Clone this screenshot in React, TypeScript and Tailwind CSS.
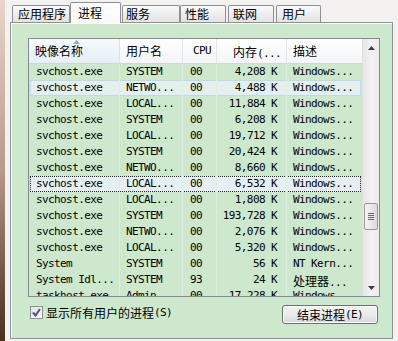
import React from "react";

const rows: string[][] = [
  ["svchost.exe", "SYSTEM", "00", "4,208 K", "Windows..."],
  ["svchost.exe", "NETWO...", "00", "4,488 K", "Windows..."],
  ["svchost.exe", "LOCAL...", "00", "11,884 K", "Windows..."],
  ["svchost.exe", "SYSTEM", "00", "6,208 K", "Windows..."],
  ["svchost.exe", "LOCAL...", "00", "19,712 K", "Windows..."],
  ["svchost.exe", "SYSTEM", "00", "20,424 K", "Windows..."],
  ["svchost.exe", "NETWO...", "00", "8,660 K", "Windows..."],
  ["svchost.exe", "LOCAL...", "00", "6,532 K", "Windows..."],
  ["svchost.exe", "LOCAL...", "00", "1,808 K", "Windows..."],
  ["svchost.exe", "SYSTEM", "00", "193,728 K", "Windows..."],
  ["svchost.exe", "NETWO...", "00", "2,076 K", "Windows..."],
  ["svchost.exe", "LOCAL...", "00", "5,320 K", "Windows..."],
  ["System", "SYSTEM", "00", "56 K", "NT Kern..."],
  ["System Idl...", "SYSTEM", "93", "24 K", "处理器..."],
  ["taskhost.exe", "Admin...", "00", "17,228 K", "Windows..."],
];

const MONO = "font-['DejaVu_Sans_Mono','Noto_Sans_CJK_SC',monospace] text-[11px] tracking-[-0.6px]";
const CJK = "font-['Noto_Sans_CJK_SC',sans-serif] text-[12px]";

function Tab({ children, cls, selected }: { children: React.ReactNode; cls: string; selected?: boolean }) {
  return (
    <div
      className={
        selected
          ? `h-[21px] -mb-px relative border border-b-0 border-[#8b8e94] rounded-t-[2px] bg-[#fcfcfc] ${CJK} leading-[18px] ${cls}`
          : `h-[17px] border border-b-0 border-[#8e9095] rounded-t-[2px] bg-gradient-to-b from-[#fbfbfb] to-[#e2e2e2] ${CJK} leading-[16px] ${cls}`
      }
    >
      {children}
    </div>
  );
}

function Row({ r, i }: { r: string[]; i: number }) {
  const hover = i === 1;
  const focus = i === 7;
  return (
    <div className="relative h-[16px] flex shrink-0">
      {hover && <div className="absolute left-[1px] right-[1px] top-0 bottom-0 bg-[#e3f0ee] border border-[#bfd9e8]" />}
      {focus && <div className="absolute left-[1px] right-[1px] top-0 bottom-0 bg-[#e6eff3] border border-dotted border-[#222]" />}
      <div className={`relative w-[91px] pl-[7px] leading-[16px] whitespace-nowrap border-r border-[#dcefdc] ${MONO}`}>{r[0]}</div>
      <div className={`relative w-[63px] pl-[6px] leading-[16px] whitespace-nowrap border-r border-[#dcefdc] ${MONO}`}>{r[1]}</div>
      <div className={`relative w-[34px] pl-[7px] leading-[16px] whitespace-nowrap border-r border-[#dcefdc] ${MONO}`}>{r[2]}</div>
      <div className={`relative w-[70px] pr-[9px] text-right leading-[16px] whitespace-nowrap border-r border-[#dcefdc] ${MONO}`}>{r[3]}</div>
      <div className={`relative w-[75px] pl-[6px] leading-[16px] whitespace-nowrap ${r[4] === "处理器..." ? "" : MONO}`}>
        {r[4] === "处理器..." ? (
          <>
            <span className={CJK}>处理器</span>
            <span className={MONO}>...</span>
          </>
        ) : (
          r[4]
        )}
      </div>
    </div>
  );
}

export default function App() {
  return (
    <div className="w-[398px] h-[341px] flex overflow-hidden bg-[#f3f2f0] text-black">
      <div className="w-[5px] h-full shrink-0 bg-gradient-to-b from-[#e8d5cc] via-[#b8998a] to-[#4a301e]" />
      <div className="flex-1 flex flex-col pl-[5px] pr-[5px]">
        <div className="h-[22px] flex items-end pl-[2px] relative z-10">
          <Tab cls="w-[58px] pl-[5px]">应用程序</Tab>
          <Tab cls="w-[51px] pl-[7px] pt-[1px]" selected>进程</Tab>
          <Tab cls="w-[58px] ml-[1px] pl-[3px]">服务</Tab>
          <Tab cls="w-[46px] pl-[4px]">性能</Tab>
          <Tab cls="w-[46px] ml-[2px] pl-[4px]">联网</Tab>
          <Tab cls="w-[45px] ml-[2px] pl-[5px]">用户</Tab>
        </div>
        <div className="h-[317px] border border-[#8d9097] bg-[#cde8cd] shadow-[inset_1px_1px_0_#ffffff] pt-[15px] pl-[17px] flex flex-col">
          <div className="w-[352px] h-[259px] border border-[#848a93] flex overflow-hidden bg-[#cde8cd]">
            <div className="w-[333px] flex flex-col overflow-hidden">
              <div className="h-[25px] shrink-0 flex border-b border-[#d5d5d5] bg-gradient-to-b from-[#ffffff] to-[#f4f5f7]">
                <div className={`relative w-[91px] pl-[6px] leading-[24px] border-r border-[#dde1e6] bg-gradient-to-b from-[#f6fafd] to-[#e4eff7] ${CJK}`}>
                  <svg className="absolute left-[44px] top-[1px]" width="7" height="4" viewBox="0 0 7 4">
                    <path d="M3.5 0 L7 4 L0 4 Z" fill="#97aac0" />
                  </svg>
                  映像名称
                </div>
                <div className={`w-[63px] pl-[6px] leading-[24px] border-r border-[#e3e5e8] ${CJK}`}>用户名</div>
                <div className={`w-[34px] pl-[10px] leading-[24px] border-r border-[#e3e5e8] ${MONO}`}>CPU</div>
                <div className="w-[70px] pl-[16px] leading-[24px] border-r border-[#e3e5e8] whitespace-nowrap">
                  <span className={CJK}>内存</span>
                  <span className={MONO}>(...</span>
                </div>
                <div className={`w-[75px] pl-[6px] leading-[24px] ${CJK}`}>描述</div>
              </div>
              {rows.map((r, i) => (
                <Row key={i} r={r} i={i} />
              ))}
            </div>
            <div className="w-[17px] flex flex-col bg-gradient-to-r from-[#e6e6e6] via-[#f2f2f2] to-[#ececec] border-l border-[#e0e0e0]">
              <div className="h-[17px] flex items-center justify-center shrink-0">
                <svg width="7" height="4" viewBox="0 0 7 4">
                  <path d="M3.5 0 L7 4 L0 4 Z" fill="#3c3c3c" />
                </svg>
              </div>
              <div className="mt-[147px] mx-[1px] h-[27px] rounded-[2px] border border-[#989898] bg-gradient-to-r from-[#f5f5f5] to-[#dadada] flex flex-col items-center justify-center gap-[1px] shrink-0">
                <div className="w-[6px] h-[1px] bg-[#6a6a6a]" />
                <div className="w-[6px] h-[1px] bg-[#6a6a6a]" />
                <div className="w-[6px] h-[1px] bg-[#6a6a6a]" />
                <div className="w-[6px] h-[1px] bg-[#6a6a6a]" />
              </div>
              <div className="flex-1" />
              <div className="h-[17px] flex items-center justify-center shrink-0">
                <svg width="7" height="4" viewBox="0 0 7 4">
                  <path d="M0 0 L7 0 L3.5 4 Z" fill="#3c3c3c" />
                </svg>
              </div>
            </div>
          </div>
          <div className="w-[352px] mt-[7px] flex justify-between px-[2px]">
            <div className="flex items-center h-[16px]">
              <div className="w-[13px] h-[13px] border border-[#8f8f8f] bg-gradient-to-br from-[#e4e4e4] to-[#fafafa] flex items-center justify-center">
                <svg width="9" height="9" viewBox="0 0 9 9">
                  <path d="M1 4.5 L3.5 7.5 L8 1" stroke="#4a4f9c" strokeWidth="2" fill="none" />
                </svg>
              </div>
              <span className={`ml-[3px] ${CJK} leading-[16px] pt-[2px]`}>显示所有用户的进程</span>
              <span className={`${MONO} leading-[16px] pt-[2px]`}>(S)</span>
            </div>
            <div className="mt-[1px] w-[96px] h-[19px] rounded-[3px] border border-[#707070] bg-gradient-to-b from-[#f3f3f3] via-[#ebebeb] to-[#d8d8d8] shadow-[inset_0_0_0_1px_#fbfbfb] flex items-center justify-center">
              <span className={`${CJK} leading-[16px]`}>结束进程</span>
              <span className={`${MONO} leading-[16px]`}>(E)</span>
            </div>
          </div>
        </div>
      </div>
    </div>
  );
}
